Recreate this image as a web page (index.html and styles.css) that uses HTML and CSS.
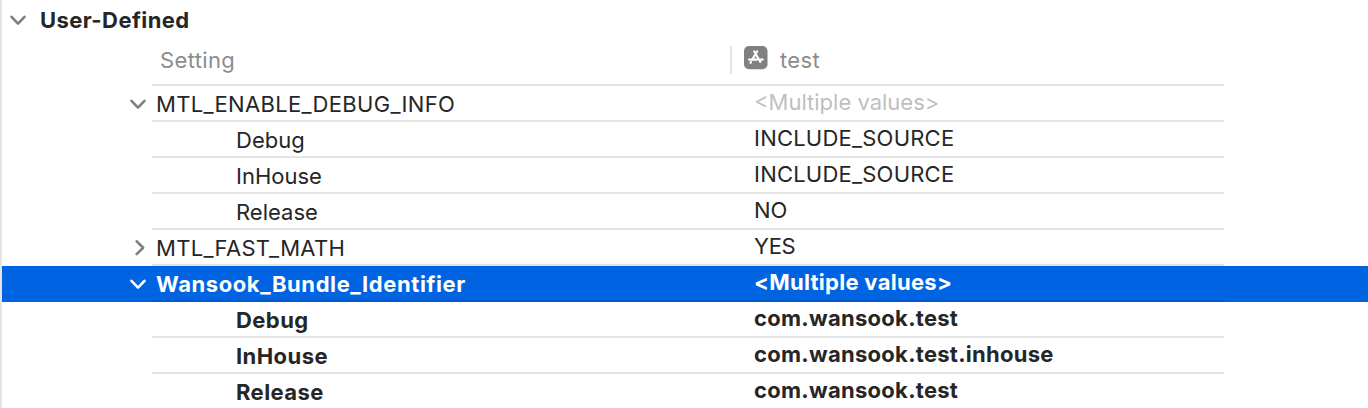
FILE: index.html
```html
<!DOCTYPE html>
<html lang="en">
<head>
<meta charset="utf-8">
<title>Build Settings</title>
<link rel="stylesheet" href="styles.css">
</head>
<body>
<main class="panel">
  <header class="section">
    <svg class="chevron" viewBox="0 0 20 20"><path d="M3.5 6.8 10 13.6 16.5 6.8"/></svg>
    <h1 class="section-title">User-Defined</h1>
  </header>
  <div class="columns">
    <span class="column-setting">Setting</span>
    <span class="column-target">
      <svg class="app-icon" viewBox="0 0 24 24">
        <rect y="0" width="23.5" height="23.2" rx="5" fill="#808080"/>
        <path d="M10.2 5.3 16.3 16M13.2 5.3 8.2 13.6M5 13.6h8M15.4 13.6h3.4M7 16l-.5 .8" fill="none" stroke="#fff" stroke-width="2.1" stroke-linecap="round"/>
      </svg>
      <span class="target-name">test</span>
    </span>
  </div>
  <div class="row group">
    <svg class="chevron" viewBox="0 0 20 20"><path d="M3.5 6.8 10 13.6 16.5 6.8"/></svg>
    <div class="cells"><span class="name">MTL_ENABLE_DEBUG_INFO</span><span class="value muted">&lt;Multiple values&gt;</span></div>
  </div>
  <div class="row child"><div class="cells"><span class="name">Debug</span><span class="value constant">INCLUDE_SOURCE</span></div></div>
  <div class="row child"><div class="cells"><span class="name">InHouse</span><span class="value constant">INCLUDE_SOURCE</span></div></div>
  <div class="row child"><div class="cells"><span class="name">Release</span><span class="value">NO</span></div></div>
  <div class="row group">
    <svg class="chevron" viewBox="0 0 20 20"><path d="M8.6 3.3 15.2 9.7 8.6 16.1"/></svg>
    <div class="cells"><span class="name">MTL_FAST_MATH</span><span class="value flag">YES</span></div>
  </div>
  <div class="row group selected bold">
    <svg class="chevron" viewBox="0 0 20 20"><path d="M3.5 6.8 10 13.6 16.5 6.8"/></svg>
    <div class="cells"><span class="name">Wansook_Bundle_Identifier</span><span class="value">&lt;Multiple values&gt;</span></div>
  </div>
  <div class="row child bold"><div class="cells"><span class="name">Debug</span><span class="value">com.wansook.test</span></div></div>
  <div class="row child bold"><div class="cells"><span class="name">InHouse</span><span class="value">com.wansook.test.inhouse</span></div></div>
  <div class="row child bold"><div class="cells"><span class="name">Release</span><span class="value">com.wansook.test</span></div></div>
</main>
</body>
</html>
```
FILE: styles.css
```css
* { box-sizing: border-box; }
body {
  margin: 0;
  background: #fff;
  color: #262626;
  font: 22px/34px Inter, "Liberation Sans", sans-serif;
  overflow: hidden;
}
.panel { height: 408px; overflow: hidden; border-left: 2px solid #e4e4e4; }
.section { display: flex; align-items: center; height: 40px; padding-left: 6px; }
.section-title { margin: 0 0 0 12px; font-size: 22px; font-weight: 700; letter-spacing: 0.42px; }
.chevron {
  flex: none;
  width: 20px;
  height: 20px;
  fill: none;
  stroke: #808080;
  stroke-width: 2.6;
  stroke-linecap: round;
  stroke-linejoin: round;
}
.columns {
  display: flex;
  width: 1072px;
  height: 46px;
  margin-left: 150px;
  padding: 6px 0 10px 8px;
  border-bottom: 2px solid #e4e4e4;
  color: #8c8c8c;
  line-height: 29px;
  letter-spacing: 0.36px;
}
.column-setting { width: 570px; }
.column-target { display: flex; padding-left: 12px; border-left: 2px solid #e4e4e4; }
.app-icon { width: 24px; height: 24px; }
.target-name { margin-left: 12px; }
.row { display: flex; align-items: flex-start; height: 36px; padding-left: 126px; }
.row > .chevron { margin: 8px 4px 0 0; }
.cells { display: flex; width: 1072px; height: 36px; border-bottom: 2px solid #e4e4e4; }
.child .cells { margin-left: 24px; }
.name { width: 602px; padding: 1px 0 0 4px; white-space: nowrap; }
.group .name { letter-spacing: 0.32px; }
.child .name { padding-left: 84px; }
.value { margin-top: -1px; white-space: nowrap; }
.constant { letter-spacing: 0.22px; }
.flag { letter-spacing: -0.3px; }
.muted { color: #bfbfbf; }
.bold { font-weight: 700; }
.bold .name { letter-spacing: 0.43px; }
.bold .value { letter-spacing: 0.28px; }
.selected { background: #0063e1; color: #fff; }
.selected .name { letter-spacing: 0.58px; }
.selected .chevron { stroke: #fff; }
.selected .cells { border-color: #0058ca; }
```
